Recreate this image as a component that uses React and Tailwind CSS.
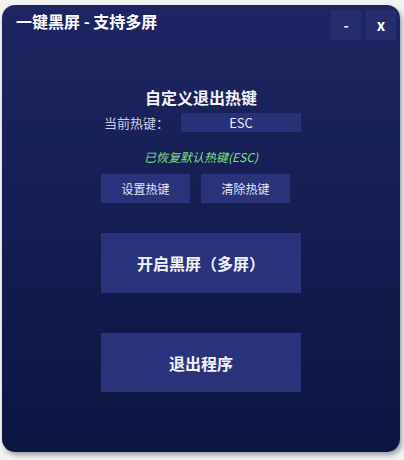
import React from "react";

const font = { fontFamily: '"Noto Sans CJK SC", "Noto Sans", sans-serif' };

export default function App() {
  return (
    <div className="h-[460px] w-[404px] bg-[#f2f2f2] pt-[5px] pl-[2px]" style={font}>
      <div className="flex h-[447px] w-[398px] flex-col rounded-[13px] bg-gradient-to-b from-[#1e2563] to-[#0c1540] shadow-[2px_3px_5px_rgba(0,0,0,0.35)]">
        {/* title bar */}
        <div className="flex h-[34px] items-start justify-between pl-[14px] pr-[4px]">
          <span className="mt-[6px] text-[16px] font-bold leading-[20px] text-white">
            一键黑屏 - 支持多屏
          </span>
          <div className="mt-[5px] flex gap-[5px]">
            <button className="flex h-[30px] w-[30px] items-center justify-center bg-[#262d6e] text-[14px] font-bold text-[#f3e8ee]">
              -
            </button>
            <button className="flex h-[30px] w-[30px] items-center justify-center bg-[#262d6e] text-[15px] font-bold text-white">
              x
            </button>
          </div>
        </div>

        <div className="mx-auto flex w-[200px] flex-col">
          <h2 className="mt-[46px] text-center text-[16px] font-bold leading-[24px] text-[#f4f4f8]">
            自定义退出热键
          </h2>

          <div className="mt-[4px] flex h-[19px] items-center justify-between pl-[3px]">
            <span className="text-[13px] leading-[19px] text-[#c9cde2]">当前热键：</span>
            <div className="flex h-[19px] w-[120px] items-center justify-center bg-[#283079] text-[13px] text-[#eceef6]">
              ESC
            </div>
          </div>

          <p className="mt-[16px] text-center text-[12px] italic leading-[18px] text-[#7fe07f]">
            已恢复默认热键(ESC)
          </p>

          <div className="mt-[8px] flex gap-[11px]">
            <button className="h-[29px] w-[89px] bg-[#2a327b] text-[12px] text-[#e2e5f2]">
              设置热键
            </button>
            <button className="h-[29px] w-[89px] bg-[#2a327b] text-[12px] text-[#e2e5f2]">
              清除热键
            </button>
          </div>

          <button className="mt-[30px] h-[60px] w-full bg-[#2a327b] text-[16px] font-bold text-[#f2f3f8]">
            开启黑屏（多屏）
          </button>

          <button className="mt-[40px] h-[59px] w-full bg-[#2a327b] text-[16px] font-bold text-[#f2f3f8]">
            退出程序
          </button>
        </div>
      </div>
    </div>
  );
}
